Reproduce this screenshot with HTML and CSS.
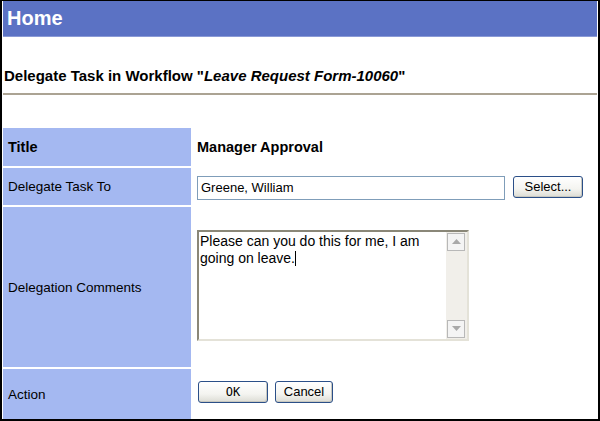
FILE: index.html
```html
<!DOCTYPE html>
<html>
<head>
<meta charset="utf-8">
<link rel="stylesheet" href="styles.css">
</head>
<body>
<div class="frame">
  <div class="header">Home</div>
  <h1 class="heading">Delegate Task in Workflow "<em>Leave Request Form-10060</em>"</h1>
  <div class="rule"></div>
  <div class="form">
    <div class="label bold">Title</div>
    <div class="value bold">Manager Approval</div>

    <div class="label">Delegate Task To</div>
    <div class="value row">
      <div class="input">Greene, William</div>
      <div class="btn btn-select">Select...</div>
    </div>

    <div class="label">Delegation Comments</div>
    <div class="value">
      <div class="textarea">
        <div class="ta-text">Please can you do this for me, I am going on leave.<span class="caret"></span></div>
        <div class="scroll">
          <div class="sbtn"><svg width="9" height="5" viewBox="0 0 9 5"><path d="M0 5 L4.5 0 L9 5 Z" fill="#a9a9a9"/></svg></div>
          <div class="track"></div>
          <div class="sbtn"><svg width="9" height="5" viewBox="0 0 9 5"><path d="M0 0 L4.5 5 L9 0 Z" fill="#a9a9a9"/></svg></div>
        </div>
      </div>
    </div>

    <div class="label">Action</div>
    <div class="value row">
      <div class="btn btn-ok">OK</div>
      <div class="btn btn-cancel">Cancel</div>
    </div>
  </div>
</div>
</body>
</html>
```

FILE: styles.css
```css
* { box-sizing: border-box; }
html, body { margin: 0; padding: 0; background: #fff; }
body { font-family: "Liberation Sans", Arial, sans-serif; color: #000; }

.frame {
  width: 600px;
  height: 421px;
  border: 2px solid #000;
  border-top-width: 1px;
  padding: 0 1px;
  display: flex;
  flex-direction: column;
  overflow: hidden;
}

.header {
  height: 36px;
  background: #5b72c4;
  border-bottom: 1px solid #8a9ad6;
  color: #fff;
  font-weight: bold;
  font-size: 20px;
  line-height: 34px;
  padding-left: 4px;
}

.heading {
  margin: 30px 0 0 1px;
  font-size: 15px;
  line-height: 18px;
  font-weight: bold;
}
.heading em { font-style: italic; }

.rule {
  margin-top: 8px;
  height: 2px;
  background: #aba393;
}

.form {
  margin-top: 33px;
  flex: 1;
  display: grid;
  grid-template-columns: 188px 1fr;
  grid-template-rows: 38px 37px 160px 1fr;
  row-gap: 2px;
  font-size: 13px;
}

.label {
  background: #a4b8f1;
  display: flex;
  align-items: center;
  padding-left: 5px;
  font-size: 13.5px;
}
.value {
  display: flex;
  align-items: center;
  padding-left: 6px;
}
.bold { font-weight: bold; }
.label.bold, .value.bold { font-size: 14.5px; }

.row { gap: 8px; }

.input {
  width: 308px;
  height: 24px;
  border: 1px solid #7f9db9;
  padding-left: 3px;
  line-height: 22px;
  font-size: 13px;
  margin-top: 2px;
}

.btn {
  height: 22px;
  border: 1px solid #2b4f88;
  border-radius: 3px;
  background: linear-gradient(#ffffff, #f4f4f0 60%, #dcdcd4);
  box-shadow: inset -1px -1px 0 #c8c8c0;
  font-size: 13px;
  line-height: 20px;
  text-align: center;
  color: #000;
}
.btn-select { width: 70px; margin-top: 1px; }
.btn-ok { width: 70px; margin-left: 1px; margin-top: -4px; font-family: "DejaVu Sans Mono", monospace; font-size: 12px; }
.btn-cancel { width: 58px; margin-left: -1px; margin-top: -4px; }

.textarea {
  width: 272px;
  height: 111px;
  margin-top: -4px;
  border: 2px solid;
  border-color: #8a8778 #e4e2d8 #e4e2d8 #8a8778;
  display: flex;
  background: #fff;
}
.ta-text {
  flex: 1;
  padding: 1px 0 0 1px;
  font-size: 14px;
  line-height: 17px;
  padding-right: 4px;
}
.caret {
  display: inline-block;
  width: 1px;
  height: 15px;
  background: #000;
  vertical-align: -3px;
}
.scroll {
  width: 21px;
  display: flex;
  flex-direction: column;
  background: #f1efea;
  padding: 1px 2px 1px 1px;
}
.sbtn {
  height: 18px;
  border: 1px solid #b8b8b8;
  background: #f4f4f4;
  display: flex;
  align-items: center;
  justify-content: center;
}
.track { flex: 1; }
```
